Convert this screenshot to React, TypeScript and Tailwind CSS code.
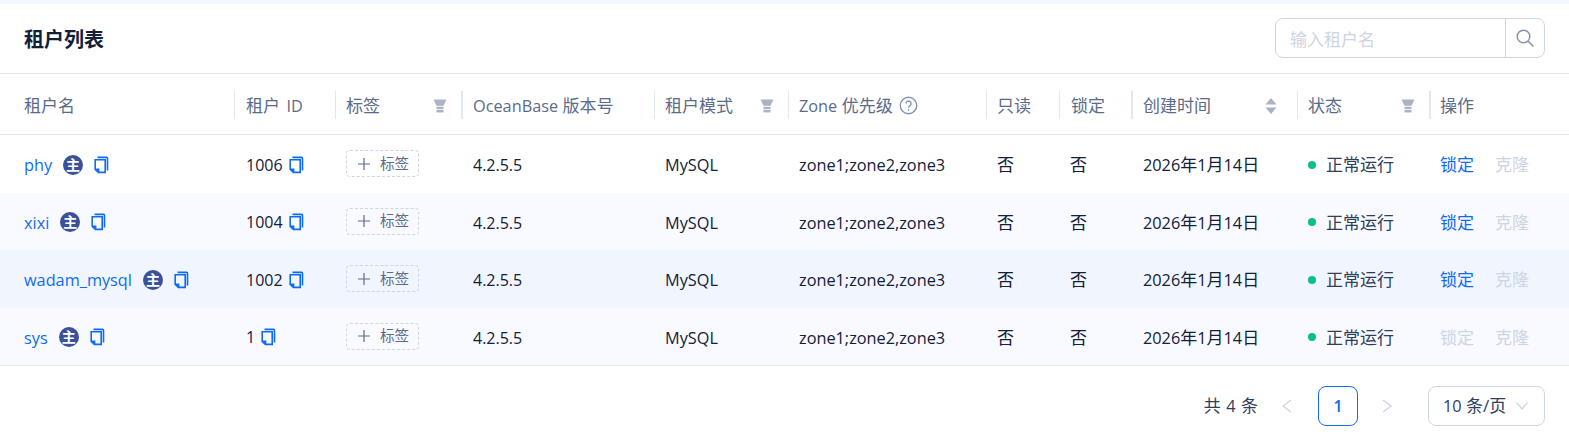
import React from "react";

const GRID = "grid grid-cols-[234px_101px_126px_193px_134px_198px_73px_72px_166px_132px_140px]";

const rows = [
  { name: "phy", id: "1006", lock: true, bg: "bg-white" },
  { name: "xixi", id: "1004", lock: true, bg: "bg-[#f8faff]" },
  { name: "wadam_mysql", id: "1002", lock: true, bg: "bg-[#f1f6fe]" },
  { name: "sys", id: "1", lock: false, bg: "bg-[#f8faff]" },
];

function L({ children }: { children: React.ReactNode }) {
  return <span className="text-[16.3px]">{children}</span>;
}

function Copy() {
  return (
    <svg width="15" height="18" viewBox="0 0 15 18" className="shrink-0">
      <path d="M3.5 1.4h9a1 1 0 0 1 1 1v12.2" fill="none" stroke="#0d6cf2" strokeWidth="1.6" />
      <path d="M4 3.8h7.2v12.6H4.4L1.2 13.4V3.8z" fill="none" stroke="#0d6cf2" strokeWidth="1.6" />
      <path d="M1 12.6h4.4v4.6z" fill="#0d6cf2" />
    </svg>
  );
}

function Primary() {
  return (
    <span className="inline-flex w-[20px] h-[20px] rounded-full bg-[#3b5199] items-center justify-center shrink-0 text-[14px] font-bold leading-none text-white">
      主
    </span>
  );
}

function Filter() {
  return (
    <svg width="14" height="14" viewBox="0 0 14 14" className="shrink-0 -mr-[6px]">
      <path d="M0.5 0.5h13l-3 6.3h-7z" fill="#aab2c5" />
      <rect x="3.5" y="7.8" width="7" height="2.4" fill="#aab2c5" />
      <rect x="3.5" y="11" width="7" height="2.4" fill="#aab2c5" />
    </svg>
  );
}

function Sort() {
  return (
    <svg width="12" height="18" viewBox="0 0 12 18" className="shrink-0">
      <path d="M6 1l5.5 6.5H.5z" fill="#aab2c5" />
      <path d="M6 17l5.5-6.5H.5z" fill="#aab2c5" />
    </svg>
  );
}

function Head({ children, icon, first, thick, tight }: { children: React.ReactNode; icon?: React.ReactNode; first?: boolean; thick?: boolean; tight?: boolean }) {
  return (
    <div className={`relative flex items-center justify-between pt-[3px] ${first ? "pl-[24px]" : tight ? "pl-[11px]" : "pl-[12px]"} pr-[20px]`}>
      {!first && (
        <span className={`absolute left-0 top-[17px] h-[28px] ${thick ? "w-[2px]" : "w-px"} bg-[#e2e8f3]`} />
      )}
      <span className="whitespace-pre flex items-center gap-[6px]">{children}</span>
      {icon}
    </div>
  );
}

export default function App() {
  return (
    <div
      className="w-[1569px] h-[442px] bg-white overflow-hidden text-[17px] text-[#132039]"
      style={{ fontFamily: '"Open Sans","Noto Sans CJK SC",sans-serif' }}
    >
      <div className="h-[4px] bg-[#f3f6fd]" />
      <div className="h-[69px] flex items-center justify-between pl-[24px] pr-[24px]">
        <h1 className="text-[20px] font-bold text-[#132039] leading-[28px] mt-[3px]">租户列表</h1>
        <div className="w-[270px] h-[40px] rounded-[8px] border border-[#cdd5e4] flex items-stretch -mt-[1px]">
          <div className="flex-1 pl-[14px] pt-[2px] flex items-center text-[#cdd5e4] leading-none">输入租户名</div>
          <div className="w-[39px] border-l border-[#cdd5e4] flex items-center justify-center">
            <svg width="20" height="20" viewBox="0 0 20 20" fill="none" stroke="#8592ad" strokeWidth="1.5">
              <circle cx="8.5" cy="8.5" r="6.3" />
              <path d="M13 13l5.5 5.5" />
            </svg>
          </div>
        </div>
      </div>

      <div className={`${GRID} h-[62px] border-y border-[#e2e8f3] text-[#5c6b8a]`}>
        <Head first>租户名</Head>
        <Head><span>租户 <span className="ml-[2px]"><L>ID</L></span></span></Head>
        <Head tight icon={<Filter />}>标签</Head>
        <Head thick><span><L>OceanBase</L> 版本号</span></Head>
        <Head tight icon={<Filter />}>租户模式</Head>
        <Head tight>
          <span><L>Zone</L> 优先级</span>
          <svg width="19" height="19" viewBox="0 0 18 18" fill="none" stroke="#8592ad" strokeWidth="1.3">
            <circle cx="9" cy="9" r="7.8" />
            <path d="M6.6 7.2a2.4 2.4 0 1 1 3.7 2c-.8.5-1.3 1-1.3 2" />
            <path d="M9 12.4v1.4" />
          </svg>
        </Head>
        <Head tight>只读</Head>
        <Head>锁定</Head>
        <Head thick icon={<Sort />}>创建时间</Head>
        <Head tight icon={<Filter />}>状态</Head>
        <Head thick tight>操作</Head>
      </div>

      {rows.map((r) => (
        <div key={r.name} className={`${GRID} h-[57.5px] pt-[2px] items-center ${r.bg}`}>
          <div className="pl-[24px] flex items-center">
            <span className="text-[#0d6cf2]"><L>{r.name}</L></span>
            <span className="ml-[11px] flex"><Primary /></span>
            <span className="ml-[11px] flex"><Copy /></span>
          </div>
          <div className="pl-[12px] flex items-center gap-[6px]">
            <span className="text-[16px]">{r.id}</span>
            <Copy />
          </div>
          <div className="pl-[11px] -mt-[2px]">
            <span className="inline-flex w-[73px] h-[27px] items-center border border-dashed border-[#cdd5e4] rounded-[4px] text-[14.6px] text-[#5c6b8a] pl-[10px] gap-[9px]">
              <svg width="14" height="14" viewBox="0 0 14 14" fill="none" stroke="#5c6b8a" strokeWidth="1.2">
                <path d="M7 1v12M1 7h12" />
              </svg>
              标签
            </span>
          </div>
          <div className="pl-[12px]"><span className="text-[16px]">4.2.5.5</span></div>
          <div className="pl-[11px]"><L>MySQL</L></div>
          <div className="pl-[11px]"><L>zone1;zone2,zone3</L></div>
          <div className="pl-[11px]">否</div>
          <div className="pl-[11px]">否</div>
          <div className="pl-[12px]"><L>2026</L>年<L>1</L>月<L>14</L>日</div>
          <div className="pl-[11px] flex items-center gap-[10px] text-[#2f3e5a]">
            <span className="w-[8px] h-[8px] rounded-full bg-[#0ac185]" />
            正常运行
          </div>
          <div className="pl-[11px] flex gap-[21px]">
            <span className={r.lock ? "text-[#0d6cf2]" : "text-[#cdd5e4]"}>锁定</span>
            <span className="text-[#cdd5e4]">克隆</span>
          </div>
        </div>
      ))}

      <div className="border-t border-[#e2e8f3] flex items-center justify-end pr-[24px] pt-[20px]">
        <span className="text-[#2f3e5a] whitespace-pre">共 <span className="mx-[1px]"><L>4</L></span> 条</span>
        <svg width="14" height="16" viewBox="0 0 14 16" fill="none" stroke="#cdd5e4" strokeWidth="1.3" className="ml-[22px]">
          <path d="M11 2L3 8l8 6" />
        </svg>
        <span className="ml-[24px] w-[40px] h-[40px] rounded-[8px] border border-[#0d6cf2] text-[#0d6cf2] text-[16px] font-semibold flex items-center justify-center">1</span>
        <svg width="14" height="16" viewBox="0 0 14 16" fill="none" stroke="#cdd5e4" strokeWidth="1.3" className="ml-[22px]">
          <path d="M3 2l8 6-8 6" />
        </svg>
        <div className="ml-[34px] w-[117px] h-[40px] rounded-[8px] border border-[#cdd5e4] flex items-center pl-[14px] gap-[9px] text-[#2f3e5a] whitespace-pre">
          <span><L>10</L> 条/页</span>
          <svg width="14" height="10" viewBox="0 0 14 10" fill="none" stroke="#cdd5e4" strokeWidth="1.2">
            <path d="M1.5 1.5L7 8l5.5-6.5" />
          </svg>
        </div>
      </div>
    </div>
  );
}
